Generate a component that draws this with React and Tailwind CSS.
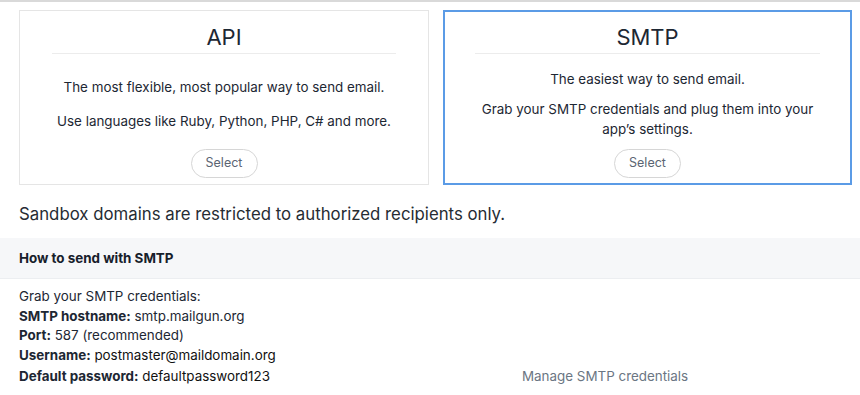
export default function App() {
  return (
    <div className="w-[860px] h-[395px] bg-white overflow-hidden text-[#1d2733]" style={{ fontFamily: 'Inter, "Liberation Sans", sans-serif' }}>
      <div className="h-[2px] bg-[#d9d9d9]" />

      <div className="grid grid-cols-[410px_409px] gap-[14px] pl-[19px] pt-[8px]">
        <div className="flex flex-col h-[175px] border border-[#e5e5e5] bg-white">
          <div className="mx-[32px] pt-[12px] pb-[2px] border-b border-[#ececec] text-center text-[22px] leading-[28px]">API</div>
          <div className="flex-1 flex flex-col justify-center gap-[14px] pt-[4px] text-center text-[13.4px] leading-[20px]">
            <p>The most flexible, most popular way to send email.</p>
            <p>Use languages like Ruby, Python, PHP, C# and more.</p>
          </div>
          <div className="flex justify-center pb-[6px]">
            <button className="h-[29px] w-[67px] rounded-full border border-[#d6d6d6] text-[12.5px] text-[#5b6573]">Select</button>
          </div>
        </div>

        <div className="flex flex-col h-[175px] border-2 border-[#5b9be6] bg-white">
          <div className="mx-[30px] pt-[11px] pb-[2px] border-b border-[#ececec] text-center text-[22px] leading-[28px]">SMTP</div>
          <div className="flex-1 flex flex-col justify-center gap-[10px] pt-[4px] text-center text-[13.4px] leading-[20px] px-[28px]">
            <p>The easiest way to send email.</p>
            <p>Grab your SMTP credentials and plug them into your app’s settings.</p>
          </div>
          <div className="flex justify-center pb-[5px]">
            <button className="h-[29px] w-[67px] rounded-full border border-[#d6d6d6] text-[12.5px] text-[#5b6573]">Select</button>
          </div>
        </div>
      </div>

      <p className="pl-[19px] mt-[16px] mb-[11px] text-[16.8px] leading-[26px] text-[#262c33]">Sandbox domains are restricted to authorized recipients only.</p>

      <div className="h-[41px] bg-[#f6f7f9] border-b border-[#eceef1] flex items-center pl-[19px]">
        <h3 className="text-[13.4px] font-bold text-[#17202b] pt-[1px]">How to send with SMTP</h3>
      </div>

      <div className="flex items-end pl-[19px] pt-[8px] text-[13.4px] leading-[19.5px]">
        <div className="w-[503px]">
          <p>Grab your SMTP credentials:</p>
          <p><span className="font-bold">SMTP hostname:</span> smtp.mailgun.org</p>
          <p><span className="font-bold">Port:</span> 587 (recommended)</p>
          <p><span className="font-bold">Username:</span> <span className="text-[#111]">postmaster@maildomain.org</span></p>
          <p className="mt-[2px]"><span className="font-bold">Default password:</span> <span className="text-[#111]">defaultpassword123</span></p>
        </div>
        <a className="text-[#6b7683]">Manage SMTP credentials</a>
      </div>
    </div>
  )
}
